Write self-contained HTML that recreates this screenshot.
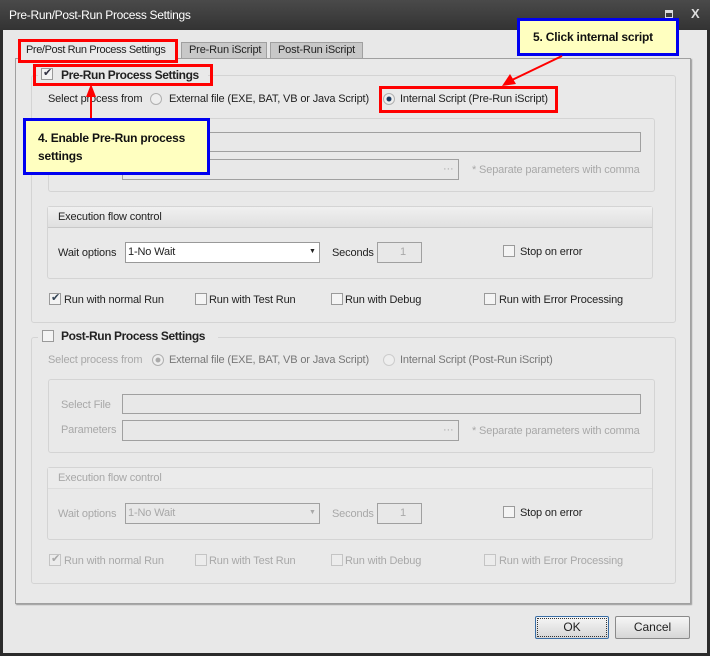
<!DOCTYPE html><html><head><style>
*{margin:0;padding:0;box-sizing:border-box}
body{width:710px;height:656px;background:#2b2b2b;font-family:"Liberation Sans",sans-serif;font-size:11px;color:#222;position:relative;overflow:hidden}
div,span{position:absolute}
.t{line-height:14px;white-space:nowrap;letter-spacing:-0.15px}
.g{color:#a8a8a8}
.cb{width:12px;height:12px;border:1px solid #9a9a9a;background:#f4f4f4}
.cb.d{border-color:#c4c4c4;background:#ececec}
.rd{width:12px;height:12px;border:1px solid #b0b0b0;border-radius:50%;background:#eee}
.inp{border:1px solid #a0a0a0;background:#e8e8e8}
.grp{border:1px solid #d4d4d4;border-radius:3px}
.hdr{background:linear-gradient(#f0f0f0,#e0e0e0);border-bottom:1px solid #c8c8c8}
.red{border:3px solid #f00}
.call{border:3px solid #0000f0;background:#ffffc0;font-weight:bold;font-size:12px;color:#111;letter-spacing:-0.2px}
.btn{border:1px solid #8a8a8a;border-radius:2px;background:linear-gradient(#f6f6f6,#d6d6d6);text-align:center;line-height:21px;font-size:12px}
</style></head><body>
<div style="left:0;top:0;width:710px;height:30px;background:linear-gradient(#4a4a4a,#333)"></div>
<div class="t" style="left:9px;top:8px;color:#fff;font-size:12px;letter-spacing:-0.3px">Pre-Run/Post-Run Process Settings</div>
<div style="left:665px;top:10px;width:8px;height:8px;border:1px solid #ddd;border-top:3px solid #ddd"></div>
<div class="t" style="left:691px;top:7px;color:#ddd;font-size:13px;font-weight:bold">X</div>
<div style="left:3px;top:30px;width:704px;height:623px;background:#e8e8e8"></div>
<!-- tabs -->
<div style="left:181px;top:42px;width:86px;height:17px;background:#c8c8c8;border:1px solid #a0a0a0"></div>
<div class="t" style="left:189px;top:43px">Pre-Run iScript</div>
<div style="left:270px;top:42px;width:93px;height:17px;background:#c8c8c8;border:1px solid #a0a0a0"></div>
<div class="t" style="left:278px;top:43px">Post-Run iScript</div>
<div style="left:15px;top:58px;width:676px;height:546px;border:1px solid #a0a0a0;background:#e9e9e9;box-shadow:1px 1px 1px #999"></div>
<div style="left:19px;top:41px;width:158px;height:19px;background:#e9e9e9"></div>
<div class="t" style="left:26px;top:43px;letter-spacing:-0.4px">Pre/Post Run Process Settings</div>
<div class="red" style="left:18px;top:39px;width:160px;height:24px"></div>
<!-- pre-run group -->
<div class="grp" style="left:31px;top:75px;width:645px;height:248px"></div>
<div style="left:38px;top:66px;width:170px;height:18px;background:#e9e9e9"></div>
<div class="cb" style="left:41px;top:68px"></div>
<div class="t" style="left:43px;top:66px;color:#334;font-size:11px">✔</div>
<div class="t" style="left:61px;top:68px;font-weight:bold;font-size:12px;letter-spacing:-0.4px">Pre-Run Process Settings</div>
<div class="red" style="left:33px;top:64px;width:180px;height:22px"></div>
<div class="t" style="left:48px;top:92px">Select process from</div>
<div class="rd" style="left:150px;top:93px"></div>
<div class="t" style="left:169px;top:92px">External file (EXE, BAT, VB or Java Script)</div>
<div class="rd" style="left:383px;top:93px;background:radial-gradient(#1a3a60 30%,#eee 40%)"></div>
<div class="t" style="left:400px;top:92px">Internal Script (Pre-Run iScript)</div>
<div class="red" style="left:379px;top:86px;width:179px;height:27px"></div>
<div class="grp" style="left:48px;top:118px;width:607px;height:74px"></div>
<div class="inp" style="left:122px;top:132px;width:519px;height:20px"></div>
<div class="inp" style="left:122px;top:159px;width:337px;height:21px"></div>
<div class="t g" style="left:443px;top:162px">···</div>
<div class="t g" style="left:472px;top:163px">* Separate parameters with comma</div>
<div class="grp" style="left:47px;top:206px;width:606px;height:73px"></div>
<div class="hdr" style="left:48px;top:207px;width:604px;height:21px"></div>
<div class="t" style="left:58px;top:210px">Execution flow control</div>
<div class="t" style="left:58px;top:246px">Wait options</div>
<div style="left:125px;top:242px;width:195px;height:21px;border:1px solid #999;background:#fff"></div>
<div class="t" style="left:128px;top:245px">1-No Wait</div>
<div class="t" style="left:309px;top:245px;font-size:7px">▼</div>
<div class="t" style="left:332px;top:246px">Seconds</div>
<div class="inp" style="left:377px;top:242px;width:45px;height:21px"></div>
<div class="t g" style="left:400px;top:245px">1</div>
<div class="cb" style="left:503px;top:245px"></div>
<div class="t" style="left:520px;top:245px">Stop on error</div>
<div class="cb" style="left:49px;top:293px"></div><div class="t" style="left:51px;top:291px;color:#345">✔</div>
<div class="t" style="left:64px;top:293px">Run with normal Run</div>
<div class="cb" style="left:195px;top:293px"></div><div class="t" style="left:209px;top:293px">Run with Test Run</div>
<div class="cb" style="left:331px;top:293px"></div><div class="t" style="left:345px;top:293px">Run with Debug</div>
<div class="cb" style="left:484px;top:293px"></div><div class="t" style="left:499px;top:293px">Run with Error Processing</div>
<!-- post-run -->
<div class="grp" style="left:31px;top:337px;width:645px;height:247px"></div>
<div style="left:38px;top:328px;width:180px;height:18px;background:#e9e9e9"></div>
<div class="cb" style="left:42px;top:330px"></div>
<div class="t" style="left:61px;top:329px;font-weight:bold;font-size:12px;letter-spacing:-0.4px">Post-Run Process Settings</div>
<div class="t g" style="left:48px;top:353px">Select process from</div>
<div class="rd" style="left:152px;top:354px;background:radial-gradient(#aaa 30%,#eee 40%)"></div>
<div class="t" style="left:169px;top:353px;color:#777">External file (EXE, BAT, VB or Java Script)</div>
<div class="rd" style="left:383px;top:354px;border-color:#ccc"></div>
<div class="t" style="left:400px;top:353px;color:#777">Internal Script (Post-Run iScript)</div>
<div class="grp" style="left:48px;top:379px;width:607px;height:74px"></div>
<div class="t g" style="left:61px;top:398px">Select File</div>
<div class="inp" style="left:122px;top:394px;width:519px;height:20px"></div>
<div class="t g" style="left:61px;top:423px">Parameters</div>
<div class="inp" style="left:122px;top:420px;width:337px;height:21px"></div>
<div class="t g" style="left:443px;top:423px">···</div>
<div class="t g" style="left:472px;top:424px">* Separate parameters with comma</div>
<div class="grp" style="left:47px;top:467px;width:606px;height:73px"></div>
<div class="hdr" style="left:48px;top:468px;width:604px;height:21px;background:#ebebeb;border-bottom-color:#ddd"></div>
<div class="t g" style="left:58px;top:471px">Execution flow control</div>
<div class="t g" style="left:58px;top:507px">Wait options</div>
<div class="inp" style="left:125px;top:503px;width:195px;height:21px"></div>
<div class="t g" style="left:128px;top:506px">1-No Wait</div>
<div class="t g" style="left:309px;top:506px;font-size:7px">▼</div>
<div class="t g" style="left:332px;top:507px">Seconds</div>
<div class="inp" style="left:377px;top:503px;width:45px;height:21px"></div>
<div class="t g" style="left:400px;top:506px">1</div>
<div class="cb" style="left:503px;top:506px"></div>
<div class="t" style="left:520px;top:506px">Stop on error</div>
<div class="cb d" style="left:49px;top:554px"></div><div class="t g" style="left:51px;top:552px">✔</div>
<div class="t g" style="left:64px;top:554px">Run with normal Run</div>
<div class="cb d" style="left:195px;top:554px"></div><div class="t g" style="left:209px;top:554px">Run with Test Run</div>
<div class="cb d" style="left:331px;top:554px"></div><div class="t g" style="left:345px;top:554px">Run with Debug</div>
<div class="cb d" style="left:484px;top:554px"></div><div class="t g" style="left:499px;top:554px">Run with Error Processing</div>
<!-- buttons -->
<div class="btn" style="left:535px;top:616px;width:74px;height:23px;outline:1px dotted #333;outline-offset:-3px;border-color:#3a6ea5">OK</div>
<div class="btn" style="left:615px;top:616px;width:75px;height:23px">Cancel</div>
<!-- callouts -->
<div class="call" style="left:23px;top:118px;width:187px;height:57px;padding:8px 0 0 12px;line-height:18px">4. Enable Pre-Run process<br>settings</div>
<div class="call" style="left:517px;top:18px;width:162px;height:38px;padding:0 0 0 13px;line-height:33px">5. Click internal script</div>
<svg style="position:absolute;left:0;top:0" width="710" height="656">
<line x1="91" y1="118" x2="91" y2="95" stroke="#f00" stroke-width="2"/>
<polygon points="91,84 86,97 96,97" fill="#f00"/>
<line x1="562" y1="56" x2="512" y2="80" stroke="#f00" stroke-width="2"/>
<polygon points="502,86 510,74 516,84" fill="#f00"/>
</svg>
</body></html>
